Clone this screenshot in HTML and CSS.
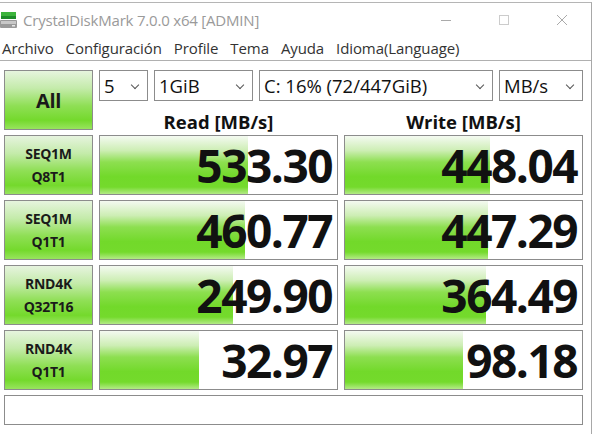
FILE: index.html
```html
<!doctype html>
<html>
<head>
<meta charset="utf-8" />
<title>CrystalDiskMark 7.0.0 x64 [ADMIN]</title>
<link rel="stylesheet" href="styles.css">
</head>
<body>
	<div class="window">
		<div class="titlebar">
			<svg class="appicon" width="18" height="20" viewBox="0 0 18 20">
				<rect x="1" y="2" width="15" height="4" fill="#3cb43c"/>
				<rect x="1" y="6" width="15" height="3" fill="#1e8c2a"/>
				<rect x="0" y="10" width="17" height="8" rx="1" fill="#9a9a9a"/>
				<rect x="1" y="11" width="15" height="3" fill="#c8c8c8"/>
				<rect x="12" y="15" width="3" height="1.5" fill="#e8e8e8"/>
			</svg>
			<span class="title">CrystalDiskMark 7.0.0 x64 [ADMIN]</span>
			<div class="controls">
				<span class="ctl">
					<svg width="12" height="12" viewBox="0 0 12 12"><path d="M1 6.5h10" stroke="#aaa" stroke-width="1"/></svg>
				</span>
				<span class="ctl">
					<svg width="12" height="12" viewBox="0 0 12 12"><rect x="1.5" y="1.5" width="9" height="9" fill="none" stroke="#ccc" stroke-width="1"/></svg>
				</span>
				<span class="ctl">
					<svg width="12" height="12" viewBox="0 0 12 12"><path d="M1 1l10 10M11 1L1 11" stroke="#aaa" stroke-width="1"/></svg>
				</span>
			</div>
		</div>
		<div class="menubar">
			<span>Archivo</span>
			<span>Configuración</span>
			<span>Profile</span>
			<span>Tema</span>
			<span>Ayuda</span>
			<span>Idioma(Language)</span>
		</div>
		<div class="panel">
			<div class="btn all">All</div>
			<div class="top">
				<div class="selects">
					<div class="sel s-count">5</div>
					<div class="sel s-size">1GiB</div>
					<div class="sel s-drive">C: 16% (72/447GiB)</div>
					<div class="sel s-unit">MB/s</div>
				</div>
				<div class="heads">
					<div>Read [MB/s]</div>
					<div>Write [MB/s]</div>
				</div>
			</div>

			<div class="btn">SEQ1M<br>Q8T1</div>
			<div class="cell"><div class="bar" style="width:148px"></div><span>533.30</span></div>
			<div class="cell"><div class="bar" style="width:145px"></div><span>448.04</span></div>

			<div class="btn">SEQ1M<br>Q1T1</div>
			<div class="cell"><div class="bar" style="width:145px"></div><span>460.77</span></div>
			<div class="cell"><div class="bar" style="width:143px"></div><span>447.29</span></div>

			<div class="btn">RND4K<br>Q32T16</div>
			<div class="cell"><div class="bar" style="width:133px"></div><span>249.90</span></div>
			<div class="cell"><div class="bar" style="width:141px"></div><span>364.49</span></div>

			<div class="btn">RND4K<br>Q1T1</div>
			<div class="cell"><div class="bar" style="width:99px"></div><span>32.97</span></div>
			<div class="cell"><div class="bar" style="width:118px"></div><span>98.18</span></div>

			<div class="status"></div>
		</div>
	</div>
</body>
</html>
```
FILE: styles.css
```css
body{margin:0; background:#fff; font-family:"Open Sans","Noto Sans",sans-serif; color:#222;}
.window{width:592px; height:434px; border-top:1px solid #b5b5b5; border-right:1px solid #a8a8a8; margin-top:2px; box-sizing:border-box;}

/* title bar */
.titlebar{height:33px; display:flex; align-items:center; padding-left:0;}
.appicon{margin:0 5px 0 0;}
.title{font-size:15px; color:#9a9a9a; letter-spacing:-0.2px;}
.controls{margin-left:auto; display:flex;}
.ctl{width:58px; height:33px; display:flex; align-items:center; justify-content:center;}

/* menu */
.menubar{height:24px; display:flex; align-items:center; gap:12px; padding-left:2px; font-size:15px; color:#333; border-bottom:1px solid #b0b0b0; letter-spacing:-0.1px;}

/* main grid */
.panel{display:grid; grid-template-columns:89px 239px 239px; grid-template-rows:60px 60px 60px 60px 60px 30px; column-gap:6px; row-gap:5px; padding:9px 0 0 4px;}
.btn{border:1px solid #8c8c8c; box-sizing:border-box; display:flex; align-items:center; justify-content:center; text-align:center; font-weight:bold; font-size:14px; line-height:23px; color:#1a1a1a; letter-spacing:-0.3px;
	background:linear-gradient(#e6f4de 0%, #c4ebaa 30%, #8fdf55 60%, #74d92c 85%, #98e45e 100%);}
.all{font-size:20px;}

.top{grid-column:2 / 4; display:flex; flex-direction:column;}
.selects{display:flex; gap:6px; height:31px;}
.sel{border:1px solid #8c8c8c; box-sizing:border-box; height:31px; font-size:18.5px; line-height:29px; padding-left:4px; position:relative; color:#111;}
.sel:after{content:""; position:absolute; right:9px; top:11px; width:5px; height:5px; border-right:1px solid #555; border-bottom:1px solid #555; transform:rotate(45deg);}
.s-count{width:49px;}
.s-size{width:99px;}
.s-drive{width:234px;}
.s-unit{width:84px;}
.heads{display:grid; grid-template-columns:239px 239px; column-gap:6px; flex:1; align-items:center; font-weight:bold; font-size:18.5px; text-align:center; color:#111; padding-top:8px;}

.cell{border:1px solid #8c8c8c; box-sizing:border-box; background:#fff; position:relative; display:flex; align-items:center; justify-content:flex-end; padding-right:5px;}
.cell span{position:relative; font-weight:bold; font-size:46px; letter-spacing:-1.5px; color:#111; line-height:1;}
.bar{position:absolute; left:0; top:0; bottom:0;
	background:linear-gradient(#f4faf1 0%, #cdeeb4 25%, #8ddf50 45%, #72d92a 70%, #74da2c 88%, #b3ea86 100%);}

.status{grid-column:1 / 4; border:1px solid #8c8c8c; box-sizing:border-box;}
```
